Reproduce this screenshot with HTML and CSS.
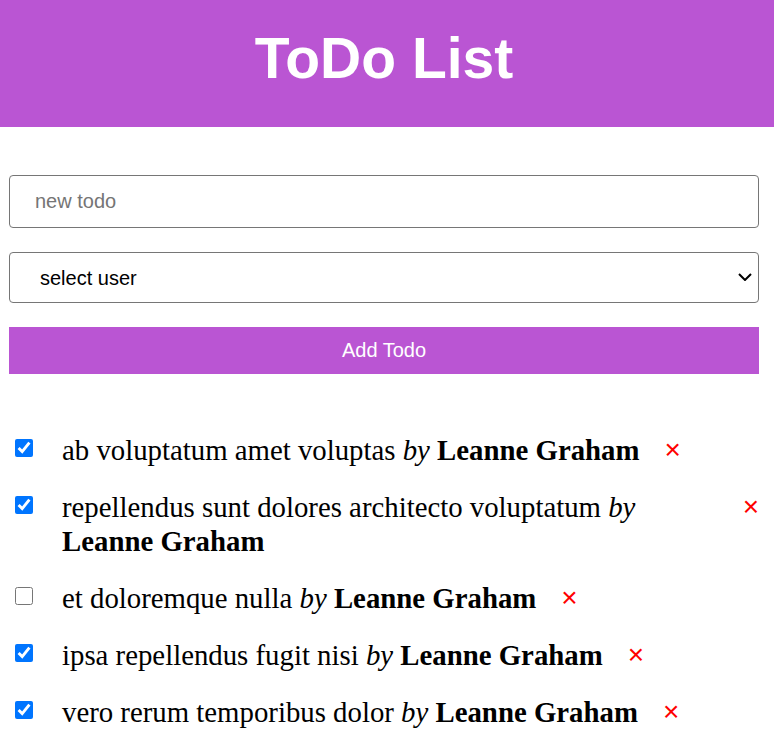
FILE: index.html
```html
<!DOCTYPE html>
<html>
<head>
<meta charset="utf-8">
<link rel="stylesheet" href="styles.css">
</head>
<body>
<header class="header"><h1 class="title">ToDo List</h1></header>
<form class="form">
  <input class="field" type="text" placeholder="new todo">
  <div class="select-wrap">
    <select class="field select">
      <option>select user</option>
    </select>
    <svg class="chevron" width="14" height="8" viewBox="0 0 14 8"><path d="M1 1 L7 7 L13 1" fill="none" stroke="#000" stroke-width="2"/></svg>
  </div>
  <button class="add" type="button">Add Todo</button>
</form>
<ul class="list">
  <li class="item"><input class="check" type="checkbox" checked><span class="text">ab voluptatum amet voluptas <i>by</i> <b>Leanne Graham</b></span><button class="del" type="button">×</button></li>
  <li class="item"><input class="check" type="checkbox" checked><span class="text">repellendus sunt dolores architecto voluptatum <i>by</i> <b>Leanne Graham</b></span><button class="del" type="button">×</button></li>
  <li class="item"><input class="check" type="checkbox"><span class="text">et doloremque nulla <i>by</i> <b>Leanne Graham</b></span><button class="del" type="button">×</button></li>
  <li class="item"><input class="check" type="checkbox" checked><span class="text">ipsa repellendus fugit nisi <i>by</i> <b>Leanne Graham</b></span><button class="del" type="button">×</button></li>
  <li class="item"><input class="check" type="checkbox" checked><span class="text">vero rerum temporibus dolor <i>by</i> <b>Leanne Graham</b></span><button class="del" type="button">×</button></li>
</ul>
</body>
</html>
```
FILE: styles.css
```css
html, body { margin: 0; padding: 0; background: #fff; }
body { font-family: "Liberation Serif", "Times New Roman", serif; }
.header {
  background: #ba55d3;
  height: 127px;
  box-sizing: border-box;
  padding: 25px 6px 0 0;
  text-align: center;
}
.title {
  margin: 0;
  color: #fff;
  font-family: "Liberation Sans", Arial, sans-serif;
  font-weight: bold;
  font-size: 57px;
  line-height: 66px;
}
.form {
  width: 750px;
  margin: 48px 0 0 9px;
  display: flex;
  flex-direction: column;
}
.field {
  box-sizing: border-box;
  width: 100%;
  height: 53px;
  border: 1px solid #767676;
  border-radius: 4px;
  padding: 0 25px;
  font-family: "Liberation Sans", Arial, sans-serif;
  font-size: 20px;
  color: #000;
  background: #fff;
  margin: 0 0 24px 0;
}
.field::placeholder { color: #757575; }
.select-wrap { position: relative; }
.select {
  display: block;
  height: 51px;
  padding-left: 30px;
  -webkit-appearance: none;
  appearance: none;
}
.chevron {
  position: absolute;
  right: 7px;
  top: 21px;
  pointer-events: none;
}
.add {
  height: 47px;
  border: none;
  background: #ba55d3;
  color: #fff;
  font-family: "Liberation Sans", Arial, sans-serif;
  font-size: 20px;
}
.list {
  list-style: none;
  margin: 59px 0 0 0;
  padding: 0 15px 0 15px;
}
.item {
  display: flex;
  align-items: flex-start;
  font-size: 28.8px;
  line-height: 34px;
  margin-bottom: 23px;
}
.check {
  width: 18px;
  height: 18px;
  margin: 6px 29px 0 0;
  flex: none;
}
.text { flex: 0 1 auto; }
.del {
  flex: none;
  background: none;
  border: none;
  color: #f00;
  font-size: 28px;
  line-height: 34px;
  padding: 0;
  margin-left: 25px;
  font-family: "Liberation Sans", Arial, sans-serif;
}
```
